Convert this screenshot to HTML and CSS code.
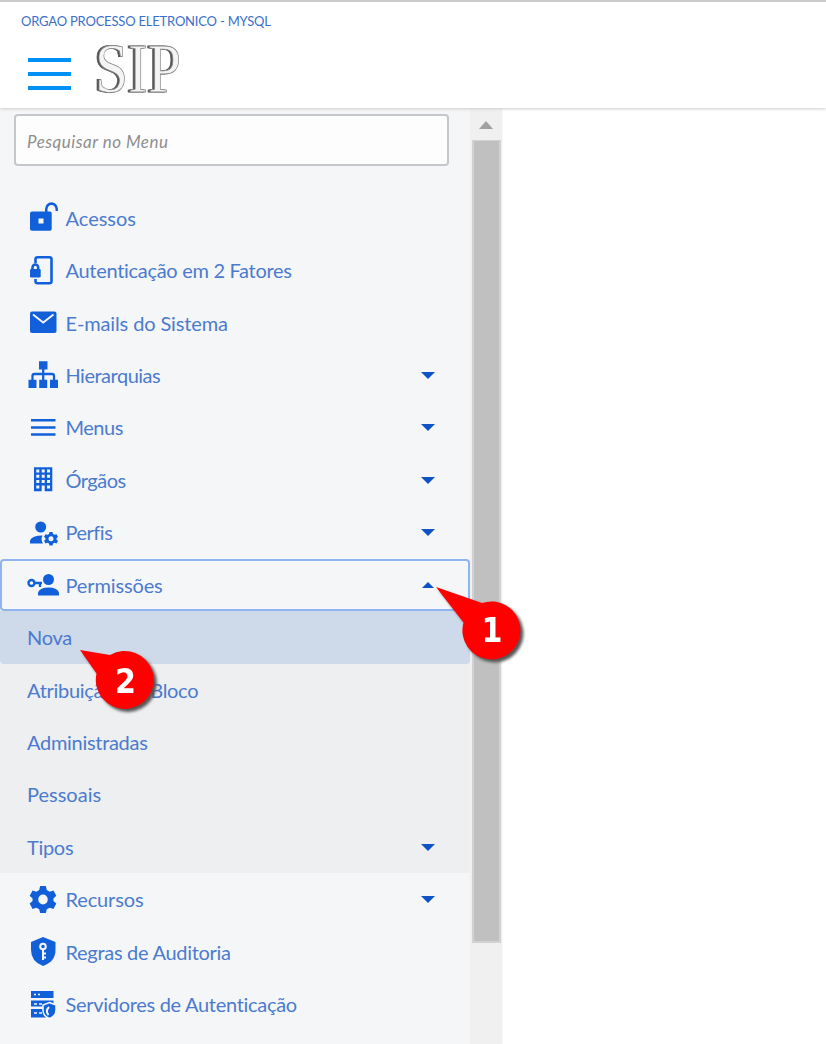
FILE: index.html
```html
<!DOCTYPE html>
<html lang="pt-BR">
<head>
<meta charset="utf-8">
<title>SIP</title>
<link rel="stylesheet" href="styles.css">
</head>
<body>
<div class="page">
<header class="header">
  <div class="org">ORGAO PROCESSO ELETRONICO - MYSQL</div>
  <div class="brand">
    <div class="burger"><i></i><i></i><i></i></div>
    <svg class="logo" width="92" height="54" viewBox="0 0 92 54">
      <text x="0" y="52" textLength="86" lengthAdjust="spacingAndGlyphs">SIP</text>
    </svg>
  </div>
</header>
<div class="body">
  <nav class="sidebar">
    <div class="search">Pesquisar no Menu</div>
    <ul class="menu">
      <li class="item"><svg class="icon" viewBox="0 0 32 32"><path fill-rule="evenodd" d="M5 9.500H18V7A6 6.300 0 0 1 31 7V9H28.500V7.500A4 4.500 0 0 0 20.500 7.500V9.500H23Q24.700 9.500 24.700 11V27Q24.700 28.800 23 28.800H5Q3 28.800 3 27V11.500Q3 9.500 5 9.500ZM11.500 16.500V21.500H16.500V16.500Z"/></svg><span class="wide">Acessos</span></li>
      <li class="item"><svg class="icon" viewBox="0 0 32 32"><path class="line" stroke-width="2.600" d="M8.500 8V4Q8.500 2.300 10.500 2.300H22.500Q24.500 2.300 24.500 4V26.500Q24.500 28.200 22.500 28.200H10.500Q8.500 28.200 8.500 26.500V24M5.500 15V12.500A2.800 3 0 0 1 11.200 12.500V15"/><rect x="3" y="14" width="10.700" height="8.500" rx="1.200"/></svg><span>Autenticação em 2 Fatores</span></li>
      <li class="item"><svg class="icon" viewBox="0 0 32 32"><rect x="3" y="4.600" width="26.500" height="21.500" rx="2"/><path class="cut" stroke-width="1.800" d="M6 7.500L16.200 15.500L26.500 7.500"/></svg><span class="mid">E-mails do Sistema</span></li>
      <li class="item"><svg class="icon" viewBox="0 0 32 32"><path d="M12 2.200h8.500v8.300H12zM1.500 20.700h8v8.300h-8zM12.200 20.700h8v8.300h-8zM23 20.700h8v8.300h-8z"/><path class="line" stroke-width="2.300" d="M16.200 10V21M5.500 21V17Q5.500 15 7.500 15H25Q27 15 27 17V21"/></svg><span class="tight">Hierarquias</span><b class="caret"></b></li>
      <li class="item"><svg class="icon" viewBox="0 0 32 32"><path class="line" stroke-width="2.500" d="M4 8.300H28.500M4 15.400H28.500M4 22.500H28.500"/></svg><span class="tight">Menus</span><b class="caret"></b></li>
      <li class="item"><svg class="icon" viewBox="0 0 32 32"><path fill-rule="evenodd" d="M7 3.300H25.300V27.300H7ZM9.300 5.500v3h3v-3zM14.700 5.500v3h3v-3zM20 5.500v3h3v-3zM9.300 10.700v3h3v-3zM14.700 10.700v3h3v-3zM20 10.700v3h3v-3zM9.300 16v3h3v-3zM14.700 16v3h3v-3zM20 16v3h3v-3zM9.300 21.500v3h3v-3zM14.700 21.500v5.800h3v-5.800zM20 21.500v3h3v-3z"/></svg><span class="tight">Órgãos</span><b class="caret"></b></li>
      <li class="item"><svg class="icon" viewBox="0 0 32 32"><circle cx="13.700" cy="10" r="5.500"/><path d="M3 26.500V23.500Q5 18.500 15.500 18.500Q13.500 22.500 16 26.500Z"/><path fill-rule="evenodd" transform="translate(24 21.700) scale(.5)" d="M-3-13.500H3L4-9.500L7-7.800L11-9L14-3.800L11-1V1.500L14 4L11 9.500L7 8.200L4 9.800L3 13.500H-3L-4 9.800L-7 8.200L-11 9.500L-14 4L-11 1.500V-1L-14-3.800L-11-9L-7-7.800L-4-9.500ZM-5 0A5 5 0 1 0 5 0A5 5 0 1 0-5 0Z"/></svg><span class="tight">Perfis</span><b class="caret"></b></li>
      <li class="item focused"><svg class="icon" viewBox="0 0 32 32"><circle class="line" stroke-width="2.400" cx="4.500" cy="14" r="3"/><path class="line" stroke-width="2.300" d="M7.500 14H15M13 14V18"/><circle cx="21.500" cy="10.500" r="5.500"/><path d="M11 26.500V23.500Q13 18.500 21.500 18.500T32 23.500V26.500Z"/></svg><span class="mid">Permissões</span><b class="caret up"></b></li>
    </ul>
    <ul class="menu submenu">
      <li class="item selected"><span>Nova</span></li>
      <li class="item"><span>Atribuição em Bloco</span></li>
      <li class="item"><span>Administradas</span></li>
      <li class="item"><span class="wide">Pessoais</span></li>
      <li class="item"><span>Tipos</span><b class="caret"></b></li>
    </ul>
    <ul class="menu">
      <li class="item"><svg class="icon" viewBox="0 0 32 32"><path fill-rule="evenodd" transform="translate(16 15.500) scale(.95 1)" d="M-3-13.500H3L4-9.500L7-7.800L11-9L14-3.800L11-1V1.500L14 4L11 9.500L7 8.200L4 9.800L3 13.500H-3L-4 9.800L-7 8.200L-11 9.500L-14 4L-11 1.500V-1L-14-3.800L-11-9L-7-7.800L-4-9.500ZM-5 0A5 5 0 1 0 5 0A5 5 0 1 0-5 0Z"/></svg><span class="mid">Recursos</span><b class="caret"></b></li>
      <li class="item"><svg class="icon" viewBox="0 0 32 32"><path d="M16 1L28.500 6V14Q28.500 25.500 16 30Q4 25.500 4 14V6Z"/><circle class="cut" stroke-width="2" cx="16" cy="10.500" r="2.800"/><path class="cut" stroke-width="2" d="M16 13.500V24M16 17.500H19M16 21.500H19"/></svg><span>Regras de Auditoria</span></li>
      <li class="item"><svg class="icon" viewBox="0 0 32 32"><path d="M4 2h22.500v7H4zM4 11.500h22.500v6H4zM4 20h15v8.500H4z"/><path class="cut" stroke-width="1.400" d="M7 5.500h2M11 5.500h2M7 15h3M12 15h3M7 24h3M12 24h3"/><path stroke="#f5f6f8" stroke-width="1.500" d="M22.500 13.500L29 16V21Q29 27 22.500 29.500Q16 27 16 21V16Z"/><path class="cut" stroke-width="2" d="M22 18Q18 22 21.500 26"/></svg><span>Servidores de Autenticação</span></li>
    </ul>
  </nav>
  <div class="scrollbar"><div class="arrow"></div><div class="thumb"></div></div>
  <main class="content"></main>
</div>
<svg class="callout first" width="100" height="84" viewBox="0 0 100 84"><path d="M0 0L46 16A29 29 0 1 1 27.500 35.500Z"/><text x="45.500" y="55" textLength="21" lengthAdjust="spacingAndGlyphs">1</text></svg>
<svg class="callout second" width="90" height="70" viewBox="0 0 90 70"><path d="M0 0L30 5A29 29 0 1 1 16.500 23.500Z"/><text x="35" y="43" textLength="21" lengthAdjust="spacingAndGlyphs">2</text></svg>
</div>
</body>
</html>
```
FILE: styles.css
```css
* { box-sizing: border-box; }
body { margin: 0; background: #fff; font-family: Lato, sans-serif; color: #4b7bcf; font-variant-ligatures: none; }
.page { position: relative; width: 826px; height: 1044px; overflow: hidden; display: flex; flex-direction: column; }
.header { height: 108px; flex: none; border-top: 2px solid #ccc; padding: 10px 21px 0; background: #fff; box-shadow: 0 1px 3px #ccc; z-index: 1; }
.org { font-size: 13px; line-height: 18px; letter-spacing: -.2px; white-space: nowrap; color: #3b70cb; }
.brand { display: flex; padding: 10px 0 0 7px; gap: 24px; }
.burger { display: flex; flex-direction: column; gap: 10px; padding-top: 18px; width: 43px; }
.burger i { height: 4px; background: #0091f7; }
.logo { overflow: visible; }
.logo text { font-family: "Liberation Serif", serif; font-size: 69px; fill: #f4f4f4; stroke: #888; stroke-width: .8px; filter: drop-shadow(-1.500px 0 0 #555); }
.body { flex: 1; display: flex; min-height: 0; }
.sidebar { width: 470px; background: #f5f6f8; padding-top: 6px; flex: none; }
.search { margin: 0 21px 26px 14px; height: 52px; border: 2px solid #c5c7ca; border-radius: 4px; background: #fdfdfd; padding: 0 11px; font-size: 17px; font-style: italic; line-height: 51px; letter-spacing: .5px; color: #8e8e8e; }
.menu { list-style: none; margin: 0; padding: 0; }
.item { height: 52.430px; display: flex; align-items: center; padding: 0 35px 0 27px; font-size: 20px; line-height: 26px; letter-spacing: -.3px; white-space: nowrap; border: 0 solid #8fb4ef; }
.item span { padding-bottom: 1px; }
.wide { letter-spacing: 0; }
.mid { letter-spacing: -.130px; }
.tight { letter-spacing: -.500px; }
.icon { width: 32px; height: 32px; margin-right: 6.500px; fill: #1160da; overflow: visible; flex: none; }
.line { fill: none; stroke: #1160da; }
.cut { fill: none; stroke: #f5f6f8; }
.caret { margin-left: auto; border: 7px solid transparent; border-top-color: #0f52c4; border-bottom: 0; }
.caret.up { border: 6px solid transparent; border-bottom-color: #0f52c4; border-top: 0; margin-right: 1px; }
.focused { border-width: 2px; border-radius: 4px; padding: 0 33px 0 25px; }
.submenu { background: #edeff0; }
.selected { background: #ced9e9; border-radius: 0 0 4px 4px; }
.scrollbar { width: 33px; background: #f0f0f0; border-right: 1px solid #f9f9f9; display: flex; flex-direction: column; align-items: center; flex: none; padding-top: 13px; }
.arrow { border: 7px solid transparent; border-bottom: 8px solid #a0a0a0; border-top: 0; }
.thumb { margin-top: 11px; width: 29px; height: 803px; background: #c0c0c0; border: solid #d2d2d2; border-width: 1px 2px 2px; }
.content { flex: 1; }
.callout { position: absolute; overflow: visible; fill: #fe0000; filter: drop-shadow(3px 3px 1.500px #555); z-index: 2; }
.callout text { fill: #fff; font: bold 33px "DejaVu Sans", sans-serif; }
.first { left: 436px; top: 587px; }
.second { left: 80px; top: 650px; }
```
